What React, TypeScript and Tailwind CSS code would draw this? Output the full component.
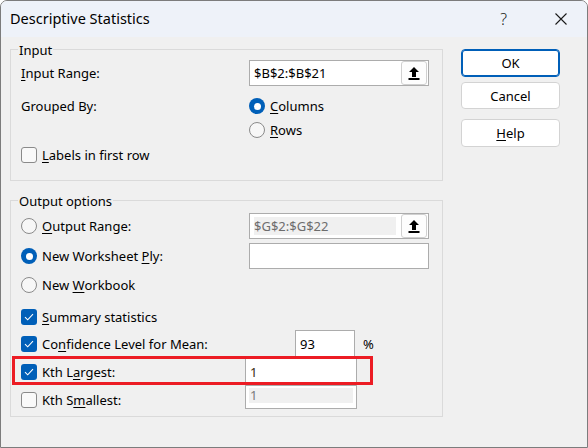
import React from 'react';

const U: React.FC<{ children: React.ReactNode }> = ({ children }) => (
  <span className="underline underline-offset-[2px] decoration-1">{children}</span>
);

// text nudged 1px down so caps sit where Segoe UI puts them
const T: React.FC<{ className?: string; children: React.ReactNode }> = ({ className = '', children }) => (
  <span className={`relative top-[1px] ${className}`}>{children}</span>
);

const Radio: React.FC<{ checked?: boolean }> = ({ checked }) =>
  checked ? (
    <span className="w-[16px] h-[16px] rounded-full bg-[#005fb8] flex items-center justify-center shrink-0">
      <span className="w-[7px] h-[7px] rounded-full bg-white" />
    </span>
  ) : (
    <span className="w-[16px] h-[16px] rounded-full border border-[#8a8a8a] bg-[#f7f7f7] shrink-0" />
  );

const Check: React.FC<{ checked?: boolean }> = ({ checked }) =>
  checked ? (
    <span className="w-[16px] h-[16px] rounded-[3px] bg-[#005fb8] flex items-center justify-center shrink-0">
      <svg width="10" height="8" viewBox="0 0 10 8" fill="none">
        <path d="M1 4.2 L3.7 6.8 L9 1.2" stroke="white" strokeWidth="1.1" />
      </svg>
    </span>
  ) : (
    <span className="w-[16px] h-[16px] rounded-[3px] border border-[#8a8a8a] bg-[#f9f9f9] shrink-0" />
  );

const UploadBtn = () => (
  <span className="w-[26px] h-[24px] mr-[1px] rounded-[3px] border border-[#d0d0d0] bg-[#fdfdfd] flex items-center justify-center shrink-0">
    <svg width="12" height="13" viewBox="0 0 12 13">
      <path d="M6 0 L11 5 H8 V10 H4 V5 H1 Z" fill="#000" />
      <rect x="0.5" y="11" width="11" height="2" fill="#000" />
    </svg>
  </span>
);

const GroupBox: React.FC<{ label: string; className: string; children: React.ReactNode }> = ({ label, className, children }) => (
  <div className={`relative border border-[#dadada] ${className}`}>
    <span className="absolute left-[7px] -top-[9px] px-[1px] bg-[#f0f0f0] leading-[18px]">{label}</span>
    {children}
  </div>
);

export default function App() {
  return (
    <div className="w-[588px] h-[448px] relative flex flex-col bg-[#f0f0f0] border border-[#7c7c7c] rounded-t-[7px] overflow-hidden text-black text-[13px] font-['Noto_Sans',sans-serif]">
      {/* title bar */}
      <div className="h-[36px] bg-[#eef2f9] flex items-center pl-[9px] shrink-0">
        <span className="text-[14.5px]">Descriptive Statistics</span>
        <span className="ml-auto mr-[48px] text-[16px] font-light text-[#1a1a1a]">?</span>
        <svg width="12" height="12" viewBox="0 0 12 12" className="mr-[20px]">
          <path d="M0.5 0.5 L11.5 11.5 M11.5 0.5 L0.5 11.5" stroke="#1a1a1a" strokeWidth="1.1" />
        </svg>
      </div>

      <div className="flex pl-[9px] pt-[12px]">
        <div className="w-[433px] flex flex-col">
          <GroupBox label="Input" className="h-[132px]">
            <div className="flex flex-col pl-[10px] pt-[10px]">
              <div className="h-[26px] flex items-center">
                <T className="w-[228px]"><U>I</U>nput Range:</T>
                <div className="w-[180px] h-[26px] bg-white border border-[#acacac] flex items-center">
                  <T className="flex-1 pl-[4px]">$B$2:$B$21</T>
                  <UploadBtn />
                </div>
              </div>
              <div className="h-[20px] mt-[10px] flex items-center">
                <T className="w-[228px]">Grouped By:</T>
                <Radio checked />
                <T className="ml-[5px]"><U>C</U>olumns</T>
              </div>
              <div className="h-[20px] mt-[4px] flex items-center pl-[228px]">
                <Radio />
                <T className="ml-[5px]"><U>R</U>ows</T>
              </div>
              <div className="h-[20px] mt-[5px] flex items-center">
                <Check />
                <T className="ml-[5px]"><U>L</U>abels in first row</T>
              </div>
            </div>
          </GroupBox>

          <GroupBox label="Output options" className="h-[217px] mt-[19px]">
            <div className="flex flex-col pl-[10px] pt-[12px]">
              <div className="h-[26px] flex items-center">
                <div className="w-[228px] flex items-center">
                  <Radio />
                  <T className="ml-[5px]"><U>O</U>utput Range:</T>
                </div>
                <div className="w-[180px] h-[26px] bg-white border border-[#acacac] flex items-center">
                  <span className="flex-1 ml-[4px] mr-[5px] h-[18px] bg-[#f0f0f0] text-[#6d6d6d] leading-[19px]">$G$2:$G$22</span>
                  <UploadBtn />
                </div>
              </div>
              <div className="h-[26px] mt-[4px] flex items-center">
                <div className="w-[228px] flex items-center">
                  <Radio checked />
                  <T className="ml-[5px]">New Worksheet <U>P</U>ly:</T>
                </div>
                <div className="w-[180px] h-[26px] bg-white border border-[#acacac]" />
              </div>
              <div className="h-[20px] mt-[6px] flex items-center">
                <Radio />
                <T className="ml-[5px]">New <U>W</U>orkbook</T>
              </div>
              <div className="h-[20px] mt-[12px] flex items-center">
                <Check checked />
                <T className="ml-[5px]"><U>S</U>ummary statistics</T>
              </div>
              <div className="h-[27px] mt-[3px] flex items-center">
                <div className="w-[274px] flex items-center">
                  <Check checked />
                  <T className="ml-[5px]">Co<U>n</U>fidence Level for Mean:</T>
                </div>
                <div className="w-[60px] h-[27px] bg-white border border-[#acacac] flex items-center pl-[4px]"><T>93</T></div>
                <T className="ml-[8px]">%</T>
              </div>
              <div className="h-[28px] mt-[1px] flex items-center">
                <div className="w-[224px] flex items-center">
                  <Check checked />
                  <T className="ml-[5px]">Kth L<U>a</U>rgest:</T>
                </div>
                <div className="w-[112px] h-[28px] bg-white border border-[#acacac] flex items-center pl-[4px]"><T className="text-[#3a2a10]">1</T></div>
              </div>
              <div className="h-[24px] -mt-[1px] flex">
                <div className="w-[224px] flex items-center pt-[5px]">
                  <Check />
                  <T className="ml-[5px]">Kth S<U>m</U>allest:</T>
                </div>
                <div className="w-[112px] h-[24px] bg-white border border-[#acacac] pt-[2px] px-[3px]">
                  <div className="h-[15px] bg-[#f0f0f0] text-[#7a7a7a] leading-[15px] pl-[1px]">1</div>
                </div>
              </div>
            </div>
          </GroupBox>
        </div>

        <div className="w-[99px] ml-[18px] flex flex-col">
          <button className="h-[28px] rounded-[4px] bg-white border border-[#005fb8] shadow-[inset_0_0_0_1px_#005fb8]"><T>OK</T></button>
          <button className="h-[27px] mt-[5px] rounded-[4px] bg-white border border-[#d3d3d3]"><T>Cancel</T></button>
          <button className="h-[28px] mt-[10px] rounded-[4px] bg-white border border-[#d3d3d3]"><T><U>H</U>elp</T></button>
        </div>
      </div>

      <div className="absolute left-[11px] top-[355px] w-[361px] h-[29px] border-[3px] border-[#ec1c24] pointer-events-none" />
    </div>
  );
}
